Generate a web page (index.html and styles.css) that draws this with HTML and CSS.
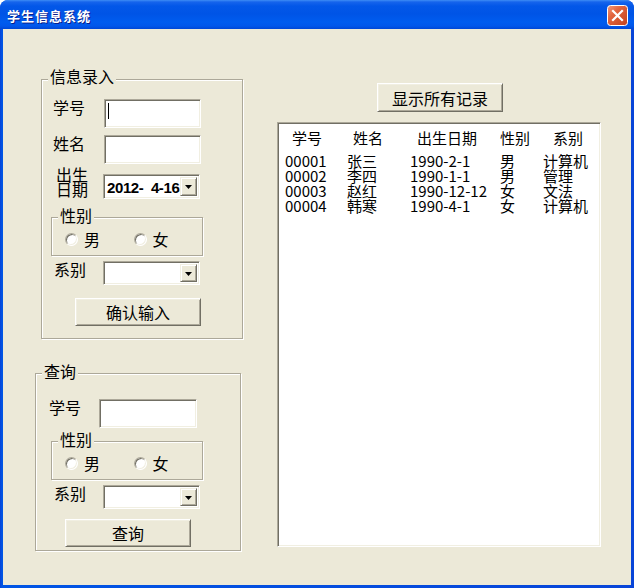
FILE: index.html
```html
<!DOCTYPE html>
<html lang="zh-CN">
<head>
<meta charset="utf-8">
<title>学生信息系统</title>
<link rel="stylesheet" href="styles.css">
</head>
<body>
<div class="window">
  <div class="titlebar">
    <span class="title">学生信息系统</span>
    <span class="close">
      <svg width="21" height="21" viewBox="0 0 21 21">
        <defs>
          <linearGradient id="cg" x1="0" y1="0" x2="1" y2="1">
            <stop offset="0" stop-color="#F29B7C"/>
            <stop offset="0.35" stop-color="#E2653F"/>
            <stop offset="1" stop-color="#C3411B"/>
          </linearGradient>
        </defs>
        <rect x="0.5" y="0.5" width="20" height="20" rx="3" fill="url(#cg)" stroke="#fff"/>
        <path d="M6 6 L15 15 M15 6 L6 15" stroke="#fff" stroke-width="2.2" stroke-linecap="square"/>
      </svg>
    </span>
  </div>
  <div class="client">
    <div class="left">
      <div class="group g1">
        <div class="gtitle">信息录入</div>
        <div class="row r-id1">
          <span class="lbl w51">学号</span>
          <span class="edit w97"><span class="caret"></span></span>
        </div>
        <div class="row r-name">
          <span class="lbl w51">姓名</span>
          <span class="edit w97"></span>
        </div>
        <div class="row r-birth">
          <span class="lbl lbl2">出生<br>日期</span>
          <span class="combo date"><span class="ctext">2012-  4-16</span><span class="dd"><svg width="7" height="4" viewBox="0 0 7 4"><path d="M0 0 H7 L3.5 4 Z" fill="#000"/></svg></span></span>
        </div>
        <div class="sub s1">
          <div class="gtitle st">性别</div>
          <div class="radios">
            <span class="radio"><span class="dot"></span><span class="rt">男</span></span>
            <span class="radio"><span class="dot"></span><span class="rt">女</span></span>
          </div>
        </div>
        <div class="row r-dept1">
          <span class="lbl w49">系别</span>
          <span class="combo dept"><span class="ctext"></span><span class="dd"><svg width="7" height="4" viewBox="0 0 7 4"><path d="M0 0 H7 L3.5 4 Z" fill="#000"/></svg></span></span>
        </div>
        <div class="btn b-confirm">确认输入</div>
      </div>

      <div class="group g2">
        <div class="gtitle">查询</div>
        <div class="row r-id2">
          <span class="lbl w50">学号</span>
          <span class="edit w98"></span>
        </div>
        <div class="sub s2">
          <div class="gtitle st">性别</div>
          <div class="radios">
            <span class="radio"><span class="dot"></span><span class="rt">男</span></span>
            <span class="radio"><span class="dot"></span><span class="rt">女</span></span>
          </div>
        </div>
        <div class="row r-dept2">
          <span class="lbl w49">系别</span>
          <span class="combo dept"><span class="ctext"></span><span class="dd"><svg width="7" height="4" viewBox="0 0 7 4"><path d="M0 0 H7 L3.5 4 Z" fill="#000"/></svg></span></span>
        </div>
        <div class="btn b-query">查询</div>
      </div>
    </div>

    <div class="right">
      <div class="btn b-show">显示所有记录</div>
      <div class="listbox">
        <div class="grid head">
          <span class="h1">学号</span>
          <span class="h2">姓名</span>
          <span class="h3">出生日期</span>
          <span class="h4">性别</span>
          <span class="h5">系别</span>
        </div>
        <div class="grid">
          <span>00001</span><span>张三</span><span>1990-2-1</span><span>男</span><span>计算机</span>
          <span>00002</span><span>李四</span><span>1990-1-1</span><span>男</span><span>管理</span>
          <span>00003</span><span>赵红</span><span>1990-12-12</span><span>女</span><span>文法</span>
          <span>00004</span><span>韩寒</span><span>1990-4-1</span><span>女</span><span>计算机</span>
        </div>
      </div>
    </div>
  </div>
</div>
</body>
</html>
```

FILE: styles.css
```css
body {
  margin: 0;
  background: #ffffff;
  font-family: "Noto Sans CJK SC", sans-serif;
}

.window {
  width: 634px;
  height: 588px;
  background: linear-gradient(to right, #0842D6 0px, #0055E5 2px, #0845D8 100%);
  border-radius: 8px 8px 0 0;
  display: flex;
  flex-direction: column;
  overflow: hidden;
}

.titlebar {
  height: 29px;
  flex: none;
  box-sizing: border-box;
  padding: 0 6px 0 7px;
  display: flex;
  justify-content: space-between;
  align-items: flex-start;
  background: linear-gradient(to bottom, #3E8DF5 0px, #1664EC 2px, #0357E8 6px, #0054E6 14px, #005CEF 22px, #0157EB 26px, #0047D6 29px);
}

.title {
  color: #ffffff;
  font-weight: bold;
  font-size: 13px;
  line-height: 13px;
  letter-spacing: 1px;
  margin-top: 9px;
  text-shadow: 1px 1px 0 #0A1E8A;
}

.close {
  width: 21px;
  height: 21px;
  margin-top: 5px;
  display: block;
}
.close svg { display: block; }

.client {
  flex: 1;
  margin: 0 3px 3px 3px;
  background: #ECE9D8;
  display: flex;
  color: #000;
  font-size: 16px;
  line-height: 16px;
}

.left {
  width: 239px;
  flex: none;
  padding-top: 50px;
}

.group {
  box-sizing: border-box;
  border: 1px solid #ACA899;
  box-shadow: inset 1px 1px 0 #ffffff, 1px 1px 0 #ffffff;
}
.g1 {
  margin-left: 38px;
  width: 202px;
  height: 260px;
}
.g2 {
  margin-left: 32px;
  margin-top: 34px;
  width: 206px;
  height: 178px;
}

.gtitle {
  width: fit-content;
  background: #ECE9D8;
  padding: 0 2px;
  margin-left: 6px;
  margin-top: -12px;
  font-size: 16px;
  line-height: 16px;
  position: relative;
}
.g2 > .gtitle { margin-top: -11px; }
.gtitle.st { margin-top: -11px; }

.row {
  display: flex;
  align-items: flex-start;
}
.lbl { flex: none; }
.w51 { width: 51px; }
.w50 { width: 50px; }
.w49 { width: 49px; }
.lbl2 { width: 47px; line-height: 15px; padding-top: 1px; }

.r-id1 { margin-top: 15px; padding-left: 11px; }
.r-name { margin-top: 7px; padding-left: 11px; }
.r-birth { margin-top: 2px; padding-left: 14px; }
.r-dept1 { margin-top: 5px; padding-left: 12px; }
.r-id2 { margin-top: 20px; padding-left: 13px; }
.r-dept2 { margin-top: 5px; padding-left: 18px; }

.edit, .combo {
  box-sizing: border-box;
  flex: none;
  background: #ffffff;
  border: 1px solid;
  border-color: #ACA899 #ffffff #ffffff #ACA899;
  box-shadow: inset 1px 1px 0 #716F64, inset -1px -1px 0 #F1EFE2;
}
.edit {
  height: 29px;
  padding: 2px 0 0 2px;
}
.w97 { width: 97px; }
.w98 { width: 98px; }

.caret {
  display: block;
  width: 1px;
  height: 16px;
  background: #000;
  margin: 1px 0 0 1px;
}

.combo {
  width: 97px;
  display: flex;
  justify-content: space-between;
  padding: 2px;
}
.combo.date { height: 25px; margin-top: 8px; }
.combo.dept { height: 24px; }

.ctext {
  font-family: "Liberation Sans", Arial, sans-serif;
  font-weight: bold;
  font-size: 15px;
  line-height: 21px;
  padding-left: 1px;
  white-space: pre;
  letter-spacing: -0.4px;
}

.dd {
  box-sizing: border-box;
  width: 17px;
  background: #ECE9D8;
  border: 1px solid;
  border-color: #F1EFE2 #716F64 #716F64 #F1EFE2;
  box-shadow: inset 1px 1px 0 #ffffff, inset -1px -1px 0 #ACA899;
  display: flex;
  align-items: center;
  justify-content: center;
}
.dd svg { display: block; margin-top: 1px; }

.sub {
  box-sizing: border-box;
  width: 152px;
  height: 39px;
  border: 1px solid #ACA899;
  box-shadow: inset 1px 1px 0 #ffffff, 1px 1px 0 #ffffff;
}
.s1 { margin-top: 18px; margin-left: 9px; }
.s2 { margin-top: 13px; margin-left: 15px; }

.radios {
  display: flex;
  margin-top: 8px;
  padding-left: 13px;
}
.radio {
  display: flex;
  align-items: center;
  width: 72px;
  height: 16px;
}
.dot {
  box-sizing: border-box;
  width: 13px;
  height: 13px;
  border-radius: 50%;
  background: #ffffff;
  border: 1px solid;
  border-color: #ACA899 #ffffff #ffffff #ACA899;
  box-shadow: inset 1px 1px 0 #716F64, inset -1px -1px 0 #F1EFE2;
  flex: none;
}
.rt { margin-left: 6px; }

.btn {
  box-sizing: border-box;
  width: 126px;
  height: 28px;
  background: #ECE9D8;
  border: 1px solid;
  border-color: #ffffff #716F64 #716F64 #ffffff;
  box-shadow: inset 1px 1px 0 #F1EFE2, inset -1px -1px 0 #ACA899;
  display: flex;
  align-items: center;
  justify-content: center;
  font-size: 16px;
}
.b-confirm { margin-top: 13px; margin-left: 33px; }
.b-query { margin-top: 10px; margin-left: 29px; }

.right {
  margin-left: 35px;
  padding-top: 54px;
}
.b-show {
  margin-left: 100px;
  height: 29px;
}

.listbox {
  box-sizing: border-box;
  margin-top: 10px;
  width: 324px;
  height: 425px;
  background: #ffffff;
  border: 1px solid;
  border-color: #ACA899 #ffffff #ffffff #ACA899;
  box-shadow: inset 1px 1px 0 #716F64, inset -1px -1px 0 #F1EFE2;
  padding: 7px 0 0 7px;
  font-size: 15px;
  line-height: 15px;
}

.grid {
  display: grid;
  grid-template-columns: 62px 63px 90px 43px 1fr;
  white-space: nowrap;
}
.head { margin-bottom: 8px; }
.h1 { padding-left: 7px; }
.h2 { padding-left: 6px; }
.h3 { padding-left: 7px; }
.h4 { padding-left: 0; }
.h5 { padding-left: 10px; }
```
